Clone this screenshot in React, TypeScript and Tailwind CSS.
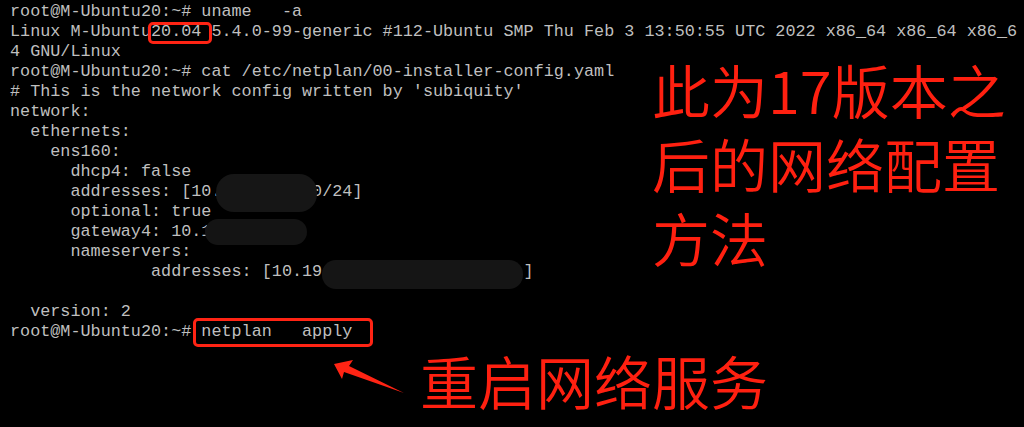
import React from "react";

const lines = [
  "root@M-Ubuntu20:~# uname   -a",
  "Linux M-Ubuntu20.04 5.4.0-99-generic #112-Ubuntu SMP Thu Feb 3 13:50:55 UTC 2022 x86_64 x86_64 x86_6",
  "4 GNU/Linux",
  "root@M-Ubuntu20:~# cat /etc/netplan/00-installer-config.yaml",
  "# This is the network config written by 'subiquity'",
  "network:",
  "  ethernets:",
  "    ens160:",
  "      dhcp4: false",
  "      addresses: [10.         0/24]",
  "      optional: true",
  "      gateway4: 10.1",
  "      nameservers:",
  "              addresses: [10.19                    ]",
  "",
  "  version: 2",
  "root@M-Ubuntu20:~# netplan   apply",
];

const cjk = { fontFamily: '"Noto Sans CJK SC", sans-serif' };

export default function App() {
  return (
    <div className="relative w-[1024px] h-[427px] overflow-hidden bg-black">
      <div
        className="flex flex-col pl-[10px] pt-[2px] text-[#bfbfbf] text-[16.8px] leading-[20px]"
        style={{ fontFamily: '"Liberation Mono", "DejaVu Sans Mono", monospace' }}
      >
        {lines.map((l, i) => (
          <div key={i} className="h-[20px] whitespace-pre">
            {l}
          </div>
        ))}
      </div>

      {/* blurred masks */}
      <div className="absolute left-[216px] top-[174px] w-[101px] h-[38px] rounded-[18px] bg-[#161616]" />
      <div className="absolute left-[205px] top-[219px] w-[102px] h-[26px] rounded-[13px] bg-[#141414]" />
      <div className="absolute left-[322px] top-[260px] w-[201px] h-[29px] rounded-[14px] bg-[#151515]" />

      {/* red boxes */}
      <div className="absolute left-[148px] top-[22px] w-[64px] h-[22px] rounded-[5px] border-[3.5px] border-[#ff2414]" />
      <div className="absolute left-[193px] top-[318px] w-[180px] h-[29px] rounded-[5px] border-[3.5px] border-[#ff2414]" />

      {/* arrow */}
      <svg className="absolute left-0 top-0" width="1024" height="427">
        <polygon
          points="334,364 353,360 349,366 404,393 344,372 342,379"
          fill="#ff2414"
        />
      </svg>

      {/* annotations */}
      <div
        className="absolute left-[652px] top-[52px] flex flex-col text-[58px] leading-[74px] font-[350] text-[#ff2010]"
        style={cjk}
      >
        <span>此为17版本之</span>
        <span>后的网络配置</span>
        <span>方法</span>
      </div>
      <div
        className="absolute left-[420px] top-[343px] text-[58px] leading-[74px] font-[350] text-[#ff2010]"
        style={cjk}
      >
        重启网络服务
      </div>
    </div>
  );
}
